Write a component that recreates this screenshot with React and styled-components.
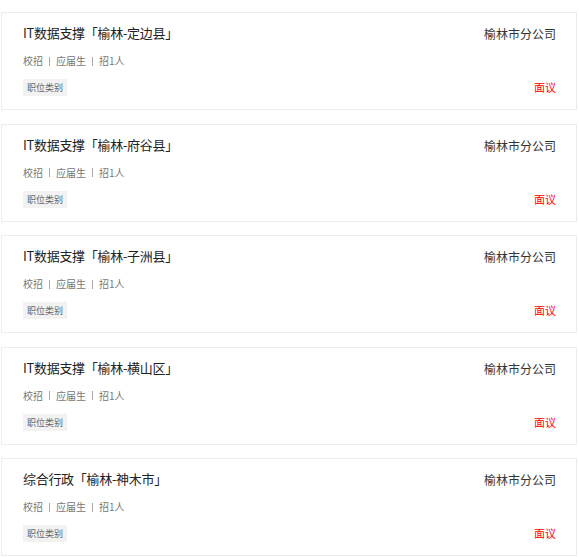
import styled, { createGlobalStyle } from "styled-components";

const GlobalStyle = createGlobalStyle`
  html, body {
    margin: 0;
    padding: 0;
    background: #fff;
    font-family: "Noto Sans CJK SC", "Noto Sans", "Liberation Sans", sans-serif;
  }
`;

const jobs = [
  { title: "IT数据支撑「榆林-定边县」" },
  { title: "IT数据支撑「榆林-府谷县」" },
  { title: "IT数据支撑「榆林-子洲县」" },
  { title: "IT数据支撑「榆林-横山区」" },
  { title: "综合行政「榆林-神木市」" },
];

const List = styled.div`
  padding: 12px 2px 0 1px;
  display: flex;
  flex-direction: column;
  gap: 13.5px;
`;

const Card = styled.div`
  height: 96px;
  border: 1px solid #ececec;
  display: flex;
  justify-content: space-between;
  padding: 0 20px 0 21px;
`;

const Left = styled.div`
  display: flex;
  flex-direction: column;
  align-items: flex-start;
  padding-top: 10px;
`;

const Title = styled.div`
  font-size: 13px;
  line-height: 20px;
  color: #222;
  letter-spacing: -0.3px;
`;

const Meta = styled.div`
  margin-top: 11px;
  font-size: 10px;
  line-height: 14px;
  color: #777;
  display: flex;
  align-items: center;
`;

const Sep = styled.span`
  display: inline-block;
  width: 1px;
  height: 9px;
  background: #aaa;
  margin: 0 6px;
`;

const Tag = styled.span`
  margin-top: 11px;
  background: #f2f2f2;
  color: #666;
  font-size: 9px;
  height: 17px;
  line-height: 17px;
  padding: 0 4px;
`;

const Right = styled.div`
  display: flex;
  flex-direction: column;
  align-items: flex-end;
  justify-content: space-between;
  padding: 11px 0 14px;
`;

const Company = styled.div`
  font-size: 12px;
  line-height: 20px;
  color: #333;
`;

const Salary = styled.div`
  font-size: 11px;
  line-height: 16px;
  color: #f00;
`;

export default function App() {
  return (
    <>
      <GlobalStyle />
      <List>
        {jobs.map((job) => (
          <Card key={job.title}>
            <Left>
              <Title>{job.title}</Title>
              <Meta>
                校招<Sep />应届生<Sep />招1人
              </Meta>
              <Tag>职位类别</Tag>
            </Left>
            <Right>
              <Company>榆林市分公司</Company>
              <Salary>面议</Salary>
            </Right>
          </Card>
        ))}
      </List>
    </>
  );
}
